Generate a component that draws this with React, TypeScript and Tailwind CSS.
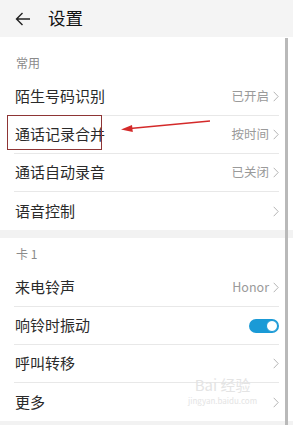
import React from 'react';

type Row = { label: string; value?: string; toggle?: boolean; chevron?: boolean };

const common: Row[] = [
  { label: '陌生号码识别', value: '已开启', chevron: true },
  { label: '通话记录合并', value: '按时间', chevron: true },
  { label: '通话自动录音', value: '已关闭', chevron: true },
  { label: '语音控制', chevron: true },
];

const card: Row[] = [
  { label: '来电铃声', value: 'Honor', chevron: true },
  { label: '响铃时振动', toggle: true },
  { label: '呼叫转移', chevron: true },
  { label: '更多', chevron: true },
];

function Chevron() {
  return (
    <svg width="6" height="11" viewBox="0 0 6 11" className="ml-[4px]">
      <path d="M0.7 0.8 L5.2 5.5 L0.7 10.2" fill="none" stroke="#b5b5b5" strokeWidth="1" />
    </svg>
  );
}

function Toggle() {
  return (
    <div className="flex h-[14px] w-[30px] items-center justify-end rounded-full bg-[#1a9ad6] pr-[1px]">
      <div className="h-[12px] w-[12px] rounded-full border border-[#1a9ad6] bg-white" />
    </div>
  );
}

function SettingRow({ row, last }: { row: Row; last: boolean }) {
  return (
    <div className="px-[14px]">
      <div
        className={
          'flex h-[38px] items-center justify-between pl-[1px] ' +
          (last ? '' : 'border-b border-[#e8e8e8]')
        }
      >
        <span className="text-[15px] text-[#2a2a2a]">{row.label}</span>
        <div className="flex items-center">
          {row.value && <span className="text-[12.5px] text-[#9a9a9a]">{row.value}</span>}
          {row.chevron && <Chevron />}
          {row.toggle && <Toggle />}
        </div>
      </div>
    </div>
  );
}

export default function App() {
  return (
    <div
      className="relative h-[425px] w-[305px] overflow-hidden bg-white"
      style={{ fontFamily: '"Noto Sans CJK SC", "Noto Sans", sans-serif' }}
    >
      <div className="w-[293px]">
        <header className="flex h-[37px] items-center bg-[#f4f4f4] pl-[15px]">
          <svg width="16" height="14" viewBox="0 0 16 14">
            <path d="M15 7 H1.5 M7.5 1 L1.5 7 L7.5 13" fill="none" stroke="#222" strokeWidth="1.4" />
          </svg>
          <span className="ml-[17px] text-[17.5px] text-[#111]">设置</span>
        </header>

        <div className="flex h-[41px] items-end pb-[6px] pl-[16px] text-[12px] text-[#8a8a8a]">常用</div>
        {common.map((r, i) => (
          <SettingRow key={r.label} row={r} last={i === common.length - 1} />
        ))}

        <div className="h-[8px] bg-[#f2f2f2]" />

        <div className="flex h-[31px] items-center pl-[16px] pt-[1px] text-[12px] text-[#8a8a8a]">卡 1</div>
        {card.map((r, i) => (
          <SettingRow key={r.label} row={r} last={i === card.length - 1} />
        ))}

        <div className="h-[8px] bg-[#f2f2f2]" />
      </div>

      {/* scrollbar */}
      <div className="absolute left-[285px] top-[38px] h-[390px] w-[3px] bg-[#b9b9b9]" />

      {/* annotation box + arrow */}
      <div className="absolute left-[7px] top-[115px] h-[35px] w-[95px] border border-[#8e3535]" />
      <svg className="absolute left-0 top-0" width="305" height="425">
        <line x1="210" y1="121" x2="130" y2="128.5" stroke="#d42a2a" strokeWidth="1.3" />
        <polygon points="121,129.5 132,125 132.8,132" fill="#d42a2a" />
      </svg>

      {/* watermark */}
      <div className="absolute left-[188px] top-[376px] flex flex-col items-center gap-[2px] text-[#e4e4e4]">
        <span className="text-[15px] leading-[18px]">Bai 经验</span>
        <span className="text-[8px] leading-[9px]">jingyan.baidu.com</span>
      </div>
    </div>
  );
}
